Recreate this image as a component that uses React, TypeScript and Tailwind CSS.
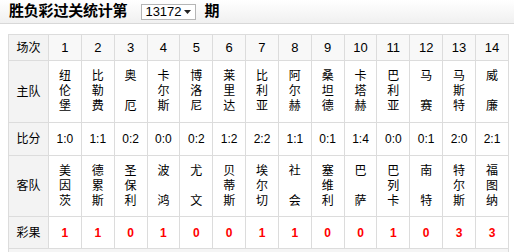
const home = ["纽伦堡", "比勒费", "奥厄", "卡尔斯", "博洛尼", "莱里达", "比利亚", "阿尔赫", "桑坦德", "卡塔赫", "巴利亚", "马赛", "马斯特", "威廉"];
const away = ["美因茨", "德累斯", "圣保利", "波鸿", "尤文", "贝蒂斯", "埃尔切", "社会", "塞维利", "巴萨", "巴列卡", "南特", "特尔斯", "福图纳"];
const scores = ["1:0", "1:1", "0:2", "0:0", "0:2", "1:2", "2:2", "1:1", "0:1", "1:4", "0:0", "0:1", "2:0", "2:1"];
const results = ["1", "1", "0", "1", "0", "0", "1", "1", "0", "0", "1", "0", "3", "3"];

function Team({ name }: { name: string }) {
  const chars = name.length === 2 ? [name[0], "\u00a0", name[1]] : name.split("");
  return (
    <div className="flex flex-col items-center leading-[15px]">
      {chars.map((c, i) => (
        <span key={i}>{c}</span>
      ))}
    </div>
  );
}

const label = "bg-[#f3f3f3] border border-[#dcdcdc] text-center text-[12px] text-black";
const cell = "border border-[#dcdcdc] text-center text-[12px]";

export default function App() {
  return (
    <div className="h-[252px] w-[514px] overflow-hidden bg-white font-['Liberation_Sans','Noto_Sans_CJK_SC',sans-serif]">
      <div className="flex h-[24px] items-center border-b border-[#d8d8d8] bg-gradient-to-b from-white to-[#f0f0f0] pl-[9px]">
        <span className="text-[15px] font-bold tracking-[-0.2px] text-black">胜负彩过关统计第</span>
        <div className="ml-[14px] flex h-[16px] w-[55px] items-center justify-between border border-[#b5b5b5] bg-white pl-[3px] pr-[4px]">
          <span className="text-[13px] leading-none text-black">13172</span>
          <svg width="7" height="4" viewBox="0 0 7 4">
            <path d="M0 0h7L3.5 4z" fill="#222" />
          </svg>
        </div>
        <span className="ml-[8px] text-[15px] font-bold text-black">期</span>
      </div>

      <table className="ml-[8px] mt-[10px] w-[501px] table-fixed border-collapse">
        <colgroup>
          <col className="w-[40px]" />
          {home.map((_, i) => (
            <col key={i} />
          ))}
        </colgroup>
        <tbody>
          <tr className="h-[26px]">
            <td className={label}>场次</td>
            {home.map((_, i) => (
              <td key={i} className={`${cell} bg-[#f8f8f8] text-[13px] text-black`}>
                {i + 1}
              </td>
            ))}
          </tr>
          <tr className="h-[62px]">
            <td className={label}>主队</td>
            {home.map((n, i) => (
              <td key={i} className={`${cell} text-black`}>
                <Team name={n} />
              </td>
            ))}
          </tr>
          <tr className="h-[33px]">
            <td className={label}>比分</td>
            {scores.map((s, i) => (
              <td key={i} className={`${cell} text-black`}>
                {s}
              </td>
            ))}
          </tr>
          <tr className="h-[61px]">
            <td className={label}>客队</td>
            {away.map((n, i) => (
              <td key={i} className={`${cell} text-black`}>
                <Team name={n} />
              </td>
            ))}
          </tr>
          <tr className="h-[32px]">
            <td className={label}>彩果</td>
            {results.map((r, i) => (
              <td key={i} className={`${cell} font-bold text-[#ff0000]`}>
                {r}
              </td>
            ))}
          </tr>
          <tr className="h-[20px]">
            <td colSpan={15} className="border border-[#dcdcdc] bg-[#f5f5f5]"></td>
          </tr>
        </tbody>
      </table>
    </div>
  );
}
